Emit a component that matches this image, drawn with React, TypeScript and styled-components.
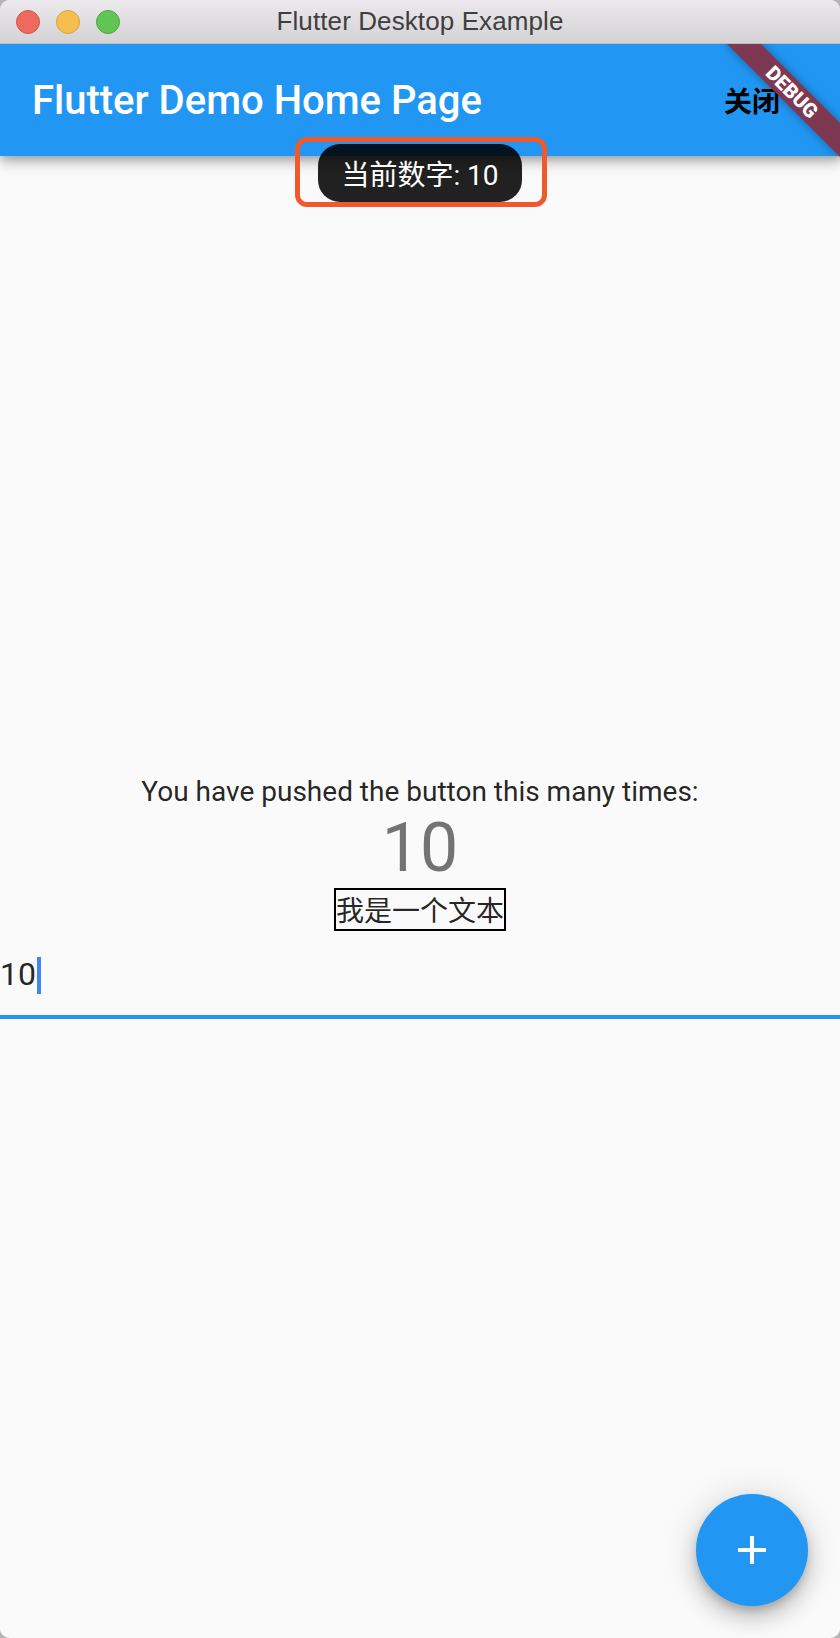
import React from "react";
import styled, { createGlobalStyle } from "styled-components";

const GlobalStyle = createGlobalStyle`
  html, body {
    margin: 0;
    padding: 0;
    background: #b5b5b5;
  }
  body {
    font-family: Roboto, "Noto Sans CJK SC", sans-serif;
  }
  * { box-sizing: border-box; }
`;

const Window = styled.div`
  width: 840px;
  height: 1638px;
  border-radius: 10px;
  overflow: hidden;
  display: flex;
  flex-direction: column;
  background: #fafafa;
`;

const TitleBar = styled.div`
  height: 44px;
  flex: none;
  display: grid;
  grid-template-columns: 1fr auto 1fr;
  align-items: center;
  background: linear-gradient(#ebe9eb, #d4d2d4);
  border-bottom: 1px solid #bdbbbd;
`;

const Lights = styled.div`
  display: flex;
  gap: 16px;
  padding-left: 16px;
`;

const Light = styled.span<{ $fill: string; $edge: string }>`
  width: 24px;
  height: 24px;
  border-radius: 50%;
  background: ${(p) => p.$fill};
  border: 1px solid ${(p) => p.$edge};
`;

const WindowTitle = styled.div`
  font-family: "Liberation Sans", Arial, sans-serif;
  font-size: 26px;
  color: #3f3f3f;
  letter-spacing: 0.1px;
`;

const AppArea = styled.div`
  flex: 1;
  position: relative;
  overflow: hidden;
  display: flex;
  flex-direction: column;
`;

const AppBar = styled.header`
  height: 112px;
  flex: none;
  position: relative;
  z-index: 1;
  display: flex;
  align-items: center;
  justify-content: space-between;
  padding-left: 32px;
  background: #2196f3;
  box-shadow: 0 4px 8px -2px rgba(0, 0, 0, 0.2), 0 8px 10px rgba(0, 0, 0, 0.14),
    0 2px 20px rgba(0, 0, 0, 0.12);
`;

const AppTitle = styled.h1`
  margin: 0;
  font-family: Roboto, sans-serif;
  font-size: 40px;
  font-weight: 500;
  color: #ffffff;
`;

const ActionButton = styled.button`
  width: 176px;
  height: 112px;
  border: none;
  background: transparent;
  padding: 0;
  font-family: Roboto, "Noto Sans CJK SC", sans-serif;
  font-size: 28px;
  font-weight: 700;
  color: #000000;
  text-align: center;
`;

const Body = styled.main`
  flex: 1;
  display: flex;
  flex-direction: column;
  align-items: center;
  justify-content: center;
  background: #fafafa;
`;

const Caption = styled.div`
  font-size: 28px;
  line-height: 33px;
  color: rgba(0, 0, 0, 0.87);
`;

const Counter = styled.div`
  font-size: 68px;
  line-height: 80px;
  color: rgba(0, 0, 0, 0.54);
`;

const BoxedText = styled.div`
  border: 2px solid #000;
  font-size: 28px;
  line-height: 39px;
  color: rgba(0, 0, 0, 0.87);
  font-family: "Noto Sans CJK SC", sans-serif;
`;

const TextField = styled.div`
  align-self: stretch;
  padding: 24px 0 22px;
  border-bottom: 4px solid #2196f3;
`;

const InputLine = styled.div`
  height: 38px;
  display: flex;
  align-items: center;
  font-size: 32px;
  line-height: 38px;
  color: rgba(0, 0, 0, 0.87);
`;

const Caret = styled.span`
  width: 4px;
  height: 37px;
  margin-left: 1px;
  margin-top: 2px;
  background: #4285f4;
`;

const Highlight = styled.div`
  position: absolute;
  left: 295px;
  top: 93px;
  width: 252px;
  height: 70px;
  border: 5px solid #ee5a2b;
  border-radius: 12px;
  z-index: 2;
  padding: 2px 0 0 18px;
`;

const Toast = styled.div`
  width: 204px;
  height: 58px;
  border-radius: 22px;
  background: rgba(0, 0, 0, 0.87);
  color: #ffffff;
  font-size: 28px;
  font-weight: 400;
  display: flex;
  align-items: center;
  justify-content: center;
  font-family: Roboto, "Noto Sans CJK SC", sans-serif;
`;

const DebugRibbon = styled.div`
  position: absolute;
  left: 712px;
  top: 36px;
  width: 160px;
  height: 24px;
  transform: rotate(45deg);
  background: #7e3852;
  box-shadow: 0 0 10px rgba(0, 0, 0, 0.35);
  z-index: 3;
  color: #ffffff;
  font-family: Roboto, sans-serif;
  font-weight: 900;
  font-size: 20px;
  line-height: 24px;
  text-align: center;
`;

const Fab = styled.button`
  position: absolute;
  right: 32px;
  bottom: 32px;
  width: 112px;
  height: 112px;
  border-radius: 50%;
  border: none;
  background: #2196f3;
  display: flex;
  align-items: center;
  justify-content: center;
  padding: 0;
  box-shadow: 0 6px 10px -2px rgba(0, 0, 0, 0.2), 0 12px 20px 2px rgba(0, 0, 0, 0.14),
    0 2px 36px 2px rgba(0, 0, 0, 0.12);
`;

export default function App() {
  return (
    <>
      <GlobalStyle />
      <Window>
        <TitleBar>
          <Lights>
            <Light $fill="#ee6a5f" $edge="#d3574c" />
            <Light $fill="#f5bf4f" $edge="#d9a23f" />
            <Light $fill="#61c454" $edge="#4ea640" />
          </Lights>
          <WindowTitle>Flutter Desktop Example</WindowTitle>
          <div />
        </TitleBar>
        <AppArea>
          <AppBar>
            <AppTitle>Flutter Demo Home Page</AppTitle>
            <ActionButton>关闭</ActionButton>
          </AppBar>
          <Body>
            <Caption>You have pushed the button this many times:</Caption>
            <Counter>10</Counter>
            <BoxedText>我是一个文本</BoxedText>
            <TextField>
              <InputLine>
                10
                <Caret />
              </InputLine>
            </TextField>
          </Body>
          <Highlight>
            <Toast>当前数字: 10</Toast>
          </Highlight>
          <DebugRibbon>DEBUG</DebugRibbon>
          <Fab aria-label="Increment">
            <svg width="48" height="48" viewBox="0 0 24 24">
              <path d="M19 13h-6v6h-2v-6H5v-2h6V5h2v6h6v2z" fill="#ffffff" />
            </svg>
          </Fab>
        </AppArea>
      </Window>
    </>
  );
}
